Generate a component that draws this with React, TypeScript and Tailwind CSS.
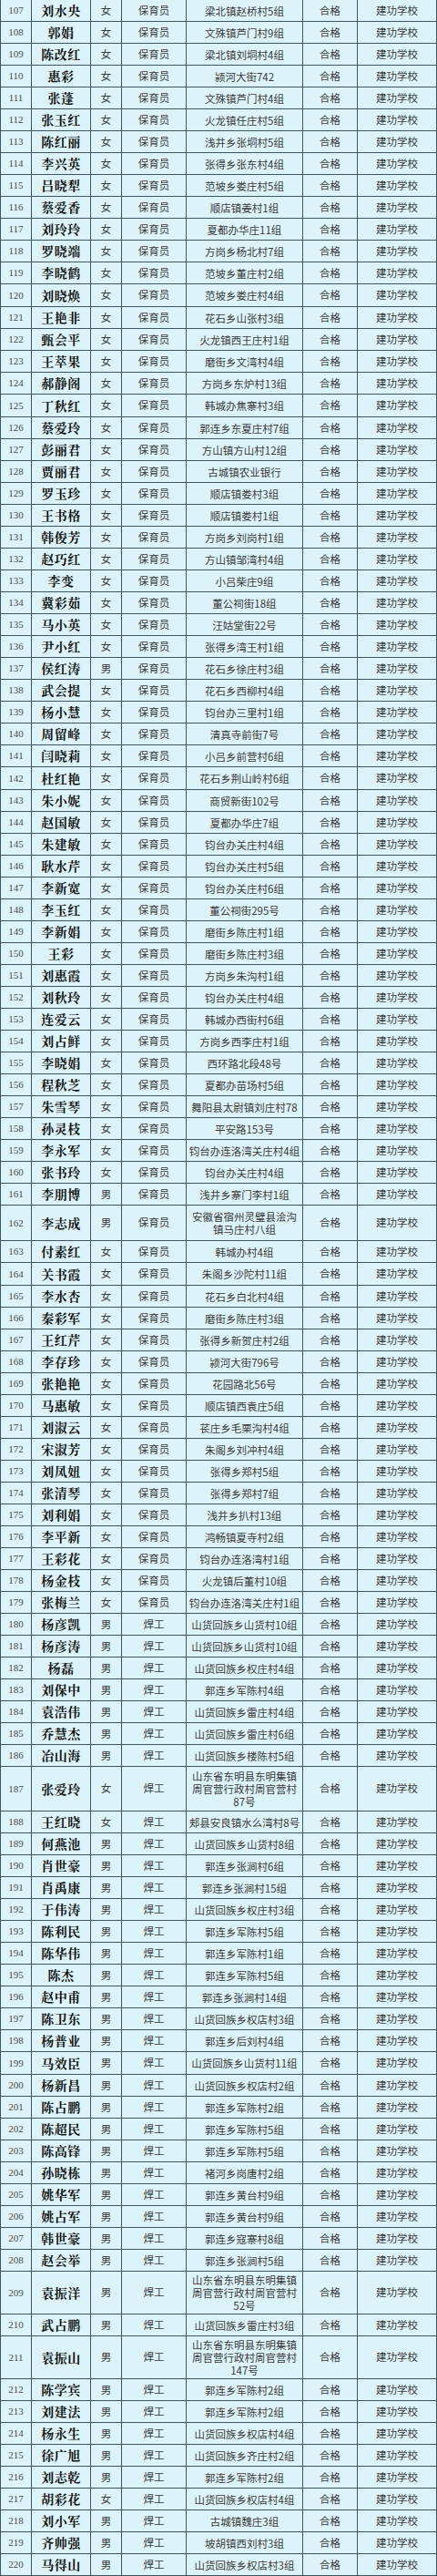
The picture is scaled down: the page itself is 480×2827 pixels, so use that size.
import React from "react";

type Row = [number, string, string, string, string[], string?];

const B = "保育员";
const H = "焊工";

const rows: Row[] = [
  [107, "刘水央", "女", B, ["梁北镇赵桥村5组"]],
  [108, "郭娟", "女", B, ["文殊镇芦门村9组"]],
  [109, "陈改红", "女", B, ["梁北镇刘垌村4组"]],
  [110, "惠彩", "女", B, ["颍河大街742"]],
  [111, "张蓬", "女", B, ["文殊镇芦门村4组"]],
  [112, "张玉红", "女", B, ["火龙镇任庄村5组"]],
  [113, "陈红丽", "女", B, ["浅井乡张垌村5组"]],
  [114, "李兴英", "女", B, ["张得乡张东村4组"]],
  [115, "吕晓犁", "女", B, ["范坡乡娄庄村5组"]],
  [116, "蔡爱香", "女", B, ["顺店镇姜村1组"]],
  [117, "刘玲玲", "女", B, ["夏都办华庄11组"]],
  [118, "罗晓端", "女", B, ["方岗乡杨北村7组"]],
  [119, "李晓鹤", "女", B, ["范坡乡董庄村2组"]],
  [120, "刘晓焕", "女", B, ["范坡乡娄庄村4组"], "h-[25px]"],
  [121, "王艳非", "女", B, ["花石乡山张村3组"]],
  [122, "甄会平", "女", B, ["火龙镇西王庄村1组"]],
  [123, "王萃果", "女", B, ["磨街乡文湾村4组"]],
  [124, "郝静阁", "女", B, ["方岗乡东炉村13组"]],
  [125, "丁秋红", "女", B, ["韩城办焦寨村3组"], "h-[25px]"],
  [126, "蔡爱玲", "女", B, ["郭连乡东夏庄村7组"]],
  [127, "彭丽君", "女", B, ["方山镇方山村12组"]],
  [128, "贾丽君", "女", B, ["古城镇农业银行"]],
  [129, "罗玉珍", "女", B, ["顺店镇娄村3组"]],
  [130, "王书格", "女", B, ["顺店镇娄村1组"]],
  [131, "韩俊芳", "女", B, ["方岗乡刘岗村1组"]],
  [132, "赵巧红", "女", B, ["方山镇邹湾村4组"]],
  [133, "李变", "女", B, ["小吕柴庄9组"]],
  [134, "冀彩茹", "女", B, ["董公祠街18组"]],
  [135, "马小英", "女", B, ["汪姑堂街22号"]],
  [136, "尹小红", "女", B, ["张得乡湾王村1组"]],
  [137, "侯红涛", "男", B, ["花石乡徐庄村3组"]],
  [138, "武会提", "女", B, ["花石乡西柳村4组"]],
  [139, "杨小慧", "女", B, ["钧台办三里村1组"]],
  [140, "周留峰", "女", B, ["清真寺前街7号"]],
  [141, "闫晓莉", "女", B, ["小吕乡前营村6组"]],
  [142, "杜红艳", "女", B, ["花石乡荆山岭村6组"], "h-[25px]"],
  [143, "朱小妮", "女", B, ["商贸新街102号"]],
  [144, "赵国敏", "女", B, ["夏都办华庄7组"]],
  [145, "朱建敏", "女", B, ["钧台办关庄村4组"]],
  [146, "耿水芹", "女", B, ["钧台办关庄村5组"]],
  [147, "李新宽", "女", B, ["钧台办关庄村6组"]],
  [148, "李玉红", "女", B, ["董公祠街295号"]],
  [149, "李新娟", "女", B, ["磨街乡陈庄村1组"]],
  [150, "王彩", "女", B, ["磨街乡陈庄村3组"]],
  [151, "刘惠霞", "女", B, ["方岗乡朱沟村1组"]],
  [152, "刘秋玲", "女", B, ["钧台办关庄村4组"]],
  [153, "连爱云", "女", B, ["韩城办西街村6组"]],
  [154, "刘占鲜", "女", B, ["方岗乡西李庄村1组"]],
  [155, "李晓娟", "女", B, ["西环路北段48号"]],
  [156, "程秋芝", "女", B, ["夏都办苗场村5组"]],
  [157, "朱雪琴", "女", B, ["舞阳县太尉镇刘庄村78"]],
  [158, "孙灵枝", "女", B, ["平安路153号"]],
  [159, "李永军", "女", B, ["钧台办连洛湾关庄村4组"]],
  [160, "张书玲", "女", B, ["钧台办关庄村4组"]],
  [161, "李朋博", "男", B, ["浅井乡寨门李村1组"]],
  [162, "李志成", "男", B, ["安徽省宿州灵璧县浍沟", "镇马庄村八组"], "h-[39px]"],
  [163, "付素红", "女", B, ["韩城办村4组"]],
  [164, "关书霞", "女", B, ["朱阁乡沙陀村11组"], "h-[25px]"],
  [165, "李水杏", "女", B, ["花石乡白北村4组"]],
  [166, "秦彩军", "女", B, ["磨街乡陈庄村3组"]],
  [167, "王红芹", "女", B, ["张得乡新贺庄村2组"]],
  [168, "李存珍", "女", B, ["颍河大街796号"]],
  [169, "张艳艳", "女", B, ["花园路北56号"]],
  [170, "马惠敏", "女", B, ["顺店镇西袁庄5组"]],
  [171, "刘淑云", "女", B, ["苌庄乡毛栗沟村4组"]],
  [172, "宋淑芳", "女", B, ["朱阁乡刘冲村4组"]],
  [173, "刘凤妞", "女", B, ["张得乡郑村5组"]],
  [174, "张清琴", "女", B, ["张得乡郑村7组"]],
  [175, "刘利娟", "女", B, ["浅井乡扒村13组"]],
  [176, "李平新", "女", B, ["鸿畅镇夏寺村2组"]],
  [177, "王彩花", "女", B, ["钧台办连洛湾村1组"]],
  [178, "杨金枝", "女", B, ["火龙镇后董村10组"]],
  [179, "张梅兰", "女", B, ["钧台办连洛湾关庄村1组"]],
  [180, "杨彦凯", "男", H, ["山货回族乡山货村10组"]],
  [181, "杨彦涛", "男", H, ["山货回族乡山货村10组"]],
  [182, "杨磊", "男", H, ["山货回族乡权庄村4组"]],
  [183, "刘保中", "男", H, ["郭连乡军陈村4组"]],
  [184, "袁浩伟", "男", H, ["山货回族乡雷庄村4组"]],
  [185, "乔慧杰", "男", H, ["山货回族乡雷庄村6组"]],
  [186, "冶山海", "男", H, ["山货回族乡楼陈村5组"]],
  [187, "张爱玲", "女", H, ["山东省东明县东明集镇", "周官营行政村周官营村", "87号"], "h-[49px]"],
  [188, "王红晓", "女", H, ["郏县安良镇水么湾村8号"]],
  [189, "何燕池", "男", H, ["山货回族乡山货村8组"]],
  [190, "肖世豪", "男", H, ["郭连乡张涧村6组"]],
  [191, "肖禹康", "男", H, ["郭连乡张涧村15组"]],
  [192, "于伟涛", "男", H, ["山货回族乡权庄村3组"]],
  [193, "陈利民", "男", H, ["郭连乡军陈村5组"]],
  [194, "陈华伟", "男", H, ["郭连乡军陈村1组"]],
  [195, "陈杰", "男", H, ["郭连乡军陈村5组"]],
  [196, "赵中甫", "男", H, ["郭连乡张涧村14组"]],
  [197, "陈卫东", "男", H, ["山货回族乡权店村3组"]],
  [198, "杨普业", "男", H, ["郭连乡后刘村4组"]],
  [199, "马效臣", "男", H, ["山货回族乡山货村11组"], "h-[25px]"],
  [200, "杨新昌", "男", H, ["山货回族乡权店村2组"]],
  [201, "陈占鹏", "男", H, ["郭连乡军陈村2组"]],
  [202, "陈超民", "男", H, ["郭连乡军陈村5组"]],
  [203, "陈高锋", "男", H, ["郭连乡军陈村5组"]],
  [204, "孙晓栋", "男", H, ["褚河乡岗唐村2组"]],
  [205, "姚华军", "男", H, ["郭连乡黄台村9组"]],
  [206, "姚占军", "男", H, ["郭连乡黄台村9组"]],
  [207, "韩世豪", "男", H, ["郭连乡寇寨村8组"]],
  [208, "赵会举", "男", H, ["郭连乡张涧村5组"]],
  [209, "袁振洋", "男", H, ["山东省东明县东明集镇", "周官营行政村周官营村", "52号"], "h-[47px]"],
  [210, "武占鹏", "男", H, ["山货回族乡雷庄村3组"]],
  [211, "袁振山", "男", H, ["山东省东明县东明集镇", "周官营行政村周官营村", "147号"], "h-[47px]"],
  [212, "陈学宾", "男", H, ["郭连乡军陈村2组"]],
  [213, "刘建法", "男", H, ["郭连乡军陈村2组"]],
  [214, "杨永生", "男", H, ["山货回族乡权店村4组"]],
  [215, "徐广旭", "男", H, ["山货回族乡齐庄村2组"]],
  [216, "刘志乾", "男", H, ["郭连乡军陈村2组"]],
  [217, "胡彩花", "女", H, ["山货回族乡权店村4组"]],
  [218, "刘小军", "男", H, ["古城镇魏庄3组"]],
  [219, "齐帅强", "男", H, ["坡胡镇西刘村3组"]],
  [220, "马得山", "男", H, ["山货回族乡权店村3组"]],
];

const cell =
  "flex items-center justify-center text-center border-r border-[#3d5662] overflow-hidden";

export default function App() {
  return (
    <div
      className="w-[480px] bg-[#dcf4f9] border-l border-[#3d5662] text-[#3a3a3a]"
      style={{ fontFamily: "'Noto Sans CJK SC', 'Noto Sans', sans-serif" }}
    >
      {rows.map(([num, name, sex, job, addr, h]) => (
        <div
          key={num}
          className={`grid grid-cols-[34px_65px_34px_71px_128px_60px_87px] border-b border-[#3d5662] ${h ?? "h-[24px]"}`}
        >
          <div className={`${cell} text-[11px] text-[#4a4a4a] font-['Liberation_Serif',serif]`}>{num}</div>
          <div className={`${cell} text-[14px] font-bold text-[#141414] tracking-[0.5px] font-['Noto_Serif_CJK_SC','Noto_Sans_CJK_SC',serif]`}>
            {name}
          </div>
          <div className={`${cell} text-[11.5px]`}>{sex}</div>
          <div className={`${cell} text-[11.5px]`}>{job}</div>
          <div className={`${cell} flex-col text-[11.5px] leading-[14px]`}>
            {addr.map((a, i) => (
              <span key={i} className="whitespace-nowrap">
                {a}
              </span>
            ))}
          </div>
          <div className={`${cell} text-[11.5px]`}>合格</div>
          <div className={`${cell} text-[11.5px]`}>建功学校</div>
        </div>
      ))}
    </div>
  );
}
